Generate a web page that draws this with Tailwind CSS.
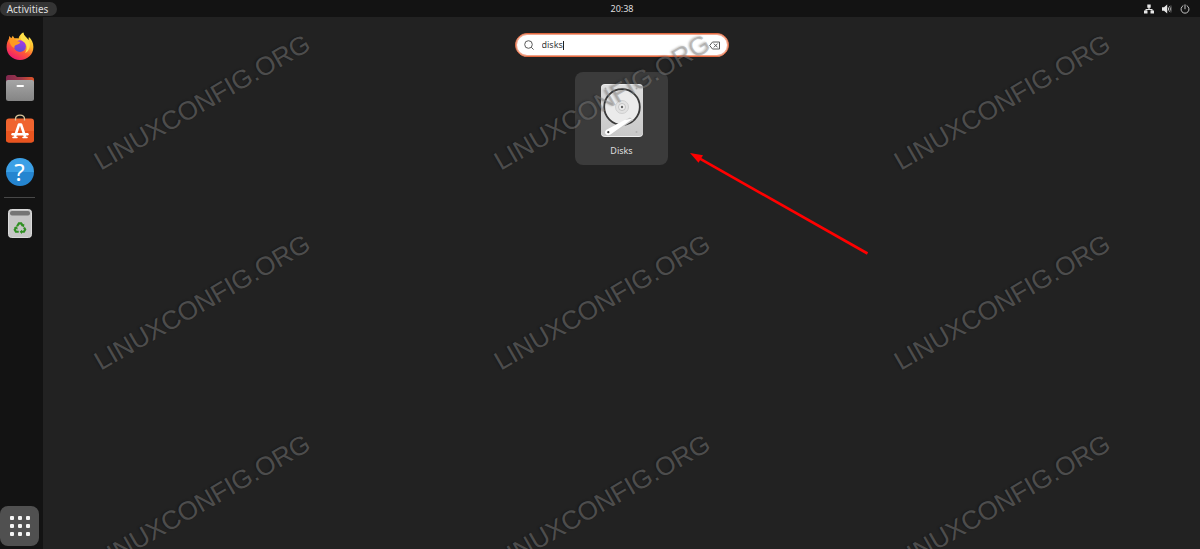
<!DOCTYPE html>
<html lang="en">
<head>
    <meta charset="UTF-8">
    <meta name="viewport" content="width=device-width, initial-scale=1.0">
    <title>Activities</title>
    <script src="https://cdn.jsdelivr.net/npm/@tailwindcss/browser@4"></script>
</head>
<body class="relative flex flex-col h-screen overflow-hidden bg-[#222222] text-[#dedede] text-[9px] leading-3 font-['Noto_Sans',sans-serif]">

    <!-- Top bar -->
    <header class="flex items-center h-[17px] bg-[#131313]">
        <div class="w-[100px]">
            <button class="block w-[57px] h-[14px] pr-[2px] rounded-full bg-[#343434] text-center text-[10px] leading-[14px]">Activities</button>
        </div>
        <time class="flex-1 text-center">20:38</time>
        <div class="flex items-center justify-end gap-2 w-14 pr-[10px]">
            <button aria-label="Network">
                <svg class="block w-[10px] h-[10px]" viewBox="0 0 10 10" fill="#e6e6e6">
                    <path d="M3.300.5h3.400v3.300H5.600v1.300h2.900v1.400h1.500v3H6.500v-3h1V6h-5v.5h1v3H0v-3h1.500V5.100h2.900V3.800H3.300z"/>
                </svg>
            </button>
            <button aria-label="Volume">
                <svg class="block w-[10px] h-[10px]" viewBox="0 0 10 10" fill="none">
                    <path d="M0 3.200h2L5.200.4v9.200L2 6.800H0z" fill="#e6e6e6"/>
                    <path d="M6.200 3.400q1.200 1.600 0 3.200" stroke="#dedede"/>
                    <path d="M7.500 2q2.200 3 0 6" stroke="#a0a0a0"/>
                    <path d="M8.800 1.200q2 3.800 0 7.600" stroke="#5c5c5c" stroke-width=".8"/>
                </svg>
            </button>
            <button aria-label="Power">
                <svg class="block w-[10px] h-[10px]" viewBox="0 0 10 10" fill="none" stroke="#c4c4c4" stroke-linecap="round">
                    <path d="M3 1.700a4 4 0 1 0 4 0M5 .8v4"/>
                </svg>
            </button>
        </div>
    </header>

    <div class="flex flex-1 min-h-0">
        <!-- Dock -->
        <aside class="flex flex-col items-center w-[43px] pt-[15px] pr-1 pb-[3px] bg-[#131313]">
            <nav class="flex flex-col items-center gap-[14px]">
                <button aria-label="Firefox">
                    <svg class="block w-7 h-7" viewBox="0 0 28 28">
                        <defs>
                            <linearGradient id="fox" x1=".8" y1=".05" x2=".25" y2=".95">
                                <stop offset="0" stop-color="#fff04a"/>
                                <stop offset=".35" stop-color="#ffb52b"/>
                                <stop offset=".62" stop-color="#ff5a36"/>
                                <stop offset="1" stop-color="#ee1b70"/>
                            </linearGradient>
                            <linearGradient id="globe" x1=".6" y1="0" x2=".4" y2="1">
                                <stop offset="0" stop-color="#a93be8"/>
                                <stop offset="1" stop-color="#5a4fd0"/>
                            </linearGradient>
                        </defs>
                        <path d="M17.200.6c.5 2.700 2 4 4 5.800l1.200 1.800.5-3.100c2.900 2.600 4.500 6 4.500 9.900C27.400 22.500 21.400 28 14 28S.6 22.500.6 15c0-3.400 1-6.200 2.300-8.200L3.300 4l2 2.300L6.800 3.700l1.600 2.600c1.300-.3 2.800-.2 4.100.2C13.200 4 15 1.800 17.200.6z" fill="url(#fox)"/>
                        <circle cx="14" cy="14.200" r="5.900" fill="url(#globe)"/>
                        <path d="M3.500 6.800c3-1 6 .2 7.300 2.100 1.400.3 2.700.5 3.500 1.300-.5 1.700-2.300 2.100-4.200 2.700-1.500.5-2 1.700-1.700 3.200-2.600-1-5.200-4.300-4.900-9.300z" fill="#ff9a20"/>
                        <path d="M17.200.6c.5 2.700 2 4 4 5.800 2.500 2.300 3.400 5.600 2.400 9-.7 2.600-2.500 4.600-4.700 5.600 1.700-2.200 2.500-5.400 1.300-8.300-1.200-2.900-5-3.700-5.700-6.400-.4-2 .8-4.400 2.700-5.700z" fill="#ffe14a"/>
                    </svg>
                </button>
                <button aria-label="Files">
                    <svg class="block w-7 h-7" viewBox="0 0 28 28">
                        <defs>
                            <linearGradient id="folder" x1="0" y1="0" x2="0" y2="1">
                                <stop offset="0" stop-color="#a5a5a5"/>
                                <stop offset="1" stop-color="#858585"/>
                            </linearGradient>
                            <linearGradient id="tab" x1="0" y1="0" x2="1" y2="0">
                                <stop offset="0" stop-color="#80284f"/>
                                <stop offset=".55" stop-color="#a03848"/>
                                <stop offset="1" stop-color="#e0562a"/>
                            </linearGradient>
                        </defs>
                        <path d="M0 3.500Q0 1 2.500 1H9l2 2h14.500Q28 3 28 5.500V12H0z" fill="url(#tab)"/>
                        <path d="M0 7.500Q0 6 2 6h24q2 0 2 2v16.500q0 2.500-2.500 2.500h-23Q0 27 0 24.500z" fill="url(#folder)"/>
                        <rect x="10.500" y="11" width="7.500" height="2" rx="1" fill="#fff"/>
                    </svg>
                </button>
                <button aria-label="Ubuntu Software">
                    <svg class="block w-7 h-7 overflow-visible" viewBox="0 0 28 28">
                        <rect y="2.500" width="28" height="24" rx="3" fill="#f0642f"/>
                        <path d="M0 15h28v8.500q0 3-3 3H3q-3 0-3-3z" fill="#e9541f"/>
                        <path d="M9.500 4.500V3C9.500-2.200 18.500-2.200 18.500 3v1.500" fill="none" stroke="#d9c59b" stroke-width="1.300"/>
                        <path d="M8.800 21 13 8.500h2L19.200 21" fill="none" stroke="#fff" stroke-width="2.600" stroke-linejoin="round"/>
                        <path d="M6.500 18.200h15" stroke="#fff" stroke-width="2.400" stroke-linecap="round"/>
                        <path d="M7 21.500h4M17 21.500h4" stroke="#fff" stroke-width="1.600" stroke-linecap="round"/>
                    </svg>
                </button>
                <button aria-label="Help" class="w-7 h-7 rounded-full bg-linear-to-b from-[#3ba0e6] from-50% to-[#2585d0] to-50% text-white text-2xl leading-[26px]">?</button>
            </nav>
            <hr class="w-[31px] mt-[11px] border-[#484848]">
            <button class="mt-[11px]" aria-label="Trash">
                <svg class="block w-6 h-[29px]" viewBox="0 0 24 29">
                    <rect x=".5" y=".5" width="23" height="28" rx="3" fill="#c6c6c6" stroke="#dadada"/>
                    <rect x="2" y="2" width="20" height="4.500" rx="2" fill="#757575"/>
                    <g transform="translate(1.500 2) scale(.88)">
                        <path d="M8.600 17.300 10.700 14h2.600l1.900 2.900M16.500 18.800l1.300 2.300-1.400 2.500h-3.200M10.500 23.600H7.300L6 21.300l1.400-2.400" fill="none" stroke="#2f8f22" stroke-width="2.500"/>
                        <path d="m16.800 14.600-.2 3.900-3.400-1.700zM14.200 21.200v4.800l-2.700-2.400zM5 18.600l3.600-1.200.8 3.600z" fill="#2f8f22"/>
                    </g>
                </svg>
            </button>
            <button class="self-stretch flex items-center justify-center h-10 mt-auto rounded-lg bg-[#505050]" aria-label="Show Applications">
                <svg class="block w-5 h-5" viewBox="0 0 20 20" fill="#f4f4f4">
                    <rect x="0" y="0" width="4" height="4" rx="1"/><rect x="8" y="0" width="4" height="4" rx="1"/><rect x="16" y="0" width="4" height="4" rx="1"/>
                    <rect x="0" y="8" width="4" height="4" rx="1"/><rect x="8" y="8" width="4" height="4" rx="1"/><rect x="16" y="8" width="4" height="4" rx="1"/>
                    <rect x="0" y="16" width="4" height="4" rx="1"/><rect x="8" y="16" width="4" height="4" rx="1"/><rect x="16" y="16" width="4" height="4" rx="1"/>
                </svg>
            </button>
        </aside>

        <!-- Search and results -->
        <main class="flex flex-col items-center flex-1 gap-[15px] pt-4">
            <form class="flex items-center w-[214px] h-6 px-2 rounded-full border border-[#e4693f] ring-1 ring-inset ring-[#e4693f]/60 bg-white text-[#3d3d3d]">
                <svg class="w-[10px] h-[10px] mr-2" viewBox="0 0 10 10" fill="none" stroke="#5a5a5a">
                    <circle cx="4.500" cy="4.500" r="3.800"/>
                    <path d="m7.200 7.200 2.400 2.400"/>
                </svg>
                <input type="text" value="disks" aria-label="Type to search" class="field-sizing-content outline-none">
                <span class="w-px h-[9px] mr-auto bg-[#222222]"></span>
                <button type="button" aria-label="Clear">
                    <svg class="block w-[11px] h-[9px]" viewBox="0 0 11 9" fill="none" stroke="#5a5a5a">
                        <path d="M3.500 1h7v7h-7L.7 4.500zM4.800 2.600l3.800 3.800M8.600 2.600 4.800 6.400"/>
                    </svg>
                </button>
            </form>

            <div class="relative">
                <button class="flex flex-col items-center gap-2 w-[93px] h-[93px] pt-3 rounded-lg bg-[#3b3b3b]">
                    <svg class="block w-[42px] h-[53px]" viewBox="0 0 42 53">
                        <defs>
                            <linearGradient id="case" x1="0" y1="0" x2="0" y2="1">
                                <stop offset="0" stop-color="#dedede"/>
                                <stop offset="1" stop-color="#c8c8c8"/>
                            </linearGradient>
                        </defs>
                        <rect width="42" height="53" rx="4" fill="#eeeeee"/>
                        <rect y="1" width="42" height="51" rx="4" fill="url(#case)"/>
                        <circle cx="21" cy="23" r="17.800" fill="#ebebeb" stroke="#3a3a3a" stroke-width="1.800"/>
                        <circle cx="21" cy="23" r="6.500" fill="#e2e2e2" stroke="#cfcfcf"/>
                        <circle cx="21" cy="23" r="3.500" fill="#efefef" stroke="#b5b5b5" stroke-width=".7"/>
                        <circle cx="21" cy="23" r="1.200" fill="#666"/>
                        <path d="M4.500 46.500 29 33.500l3.500 2.500L10 50.800z" fill="#c8c8c8"/>
                        <path d="M5 46 23.500 36l8.500-1.500L9.500 50.500Q6 52 4.500 50T5 46z" fill="#fff"/>
                        <circle cx="7.300" cy="48.200" r="1.100" fill="#333"/>
                        <g fill="#b0b0b0"><circle cx="4.500" cy="4.500" r="1"/><circle cx="35.500" cy="4.500" r="1"/><circle cx="35.500" cy="48" r="1"/></g>
                    </svg>
                    Disks
                </button>

                <!-- Pointer to the result -->
                <svg class="absolute left-full top-[80px] ml-[22px] w-[180px] h-[104px]" viewBox="0 0 180 104">
                    <path d="M9 6.200 177.500 101.500" stroke="#ff0000" stroke-width="2.600"/>
                    <path d="M0 1 13 3.200 8.500 10.800z" fill="#ff0000"/>
                </svg>
            </div>
        </main>
    </div>

    <!-- Watermark -->
    <div class="absolute inset-y-0.5 left-0.5 -right-0.5 grid grid-cols-3 auto-rows-[200px] place-items-center pointer-events-none text-[26px] leading-8 text-[#8a8a8a]/45 text-shadow-[-1px_-1px_2px_rgb(0_0_0/0.25)] font-['Liberation_Sans',sans-serif]">
        <span class="-rotate-30">LINUXCONFIG.ORG</span>
        <span class="-rotate-30">LINUXCONFIG.ORG</span>
        <span class="-rotate-30">LINUXCONFIG.ORG</span>
        <span class="-rotate-30">LINUXCONFIG.ORG</span>
        <span class="-rotate-30">LINUXCONFIG.ORG</span>
        <span class="-rotate-30">LINUXCONFIG.ORG</span>
        <span class="-rotate-30">LINUXCONFIG.ORG</span>
        <span class="-rotate-30">LINUXCONFIG.ORG</span>
        <span class="-rotate-30">LINUXCONFIG.ORG</span>
    </div>
</body>
</html>
